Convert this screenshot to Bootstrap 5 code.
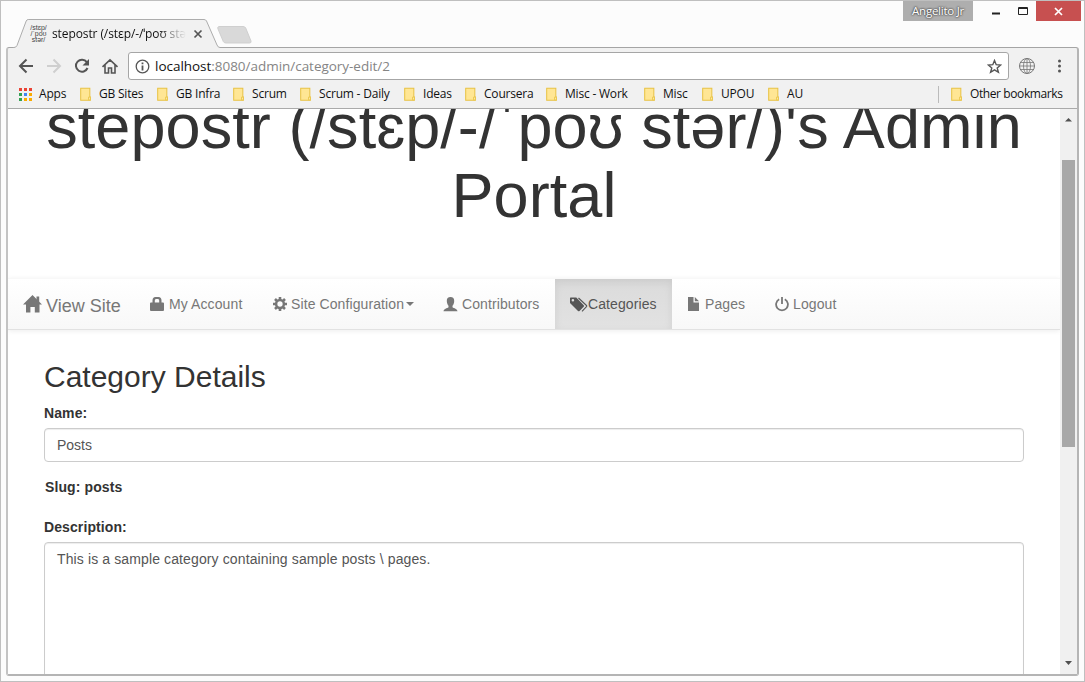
<!DOCTYPE html>
<html lang="en">
<head>
<meta charset="utf-8">
<title>stepostr admin</title>
<link href="https://cdn.jsdelivr.net/npm/bootstrap@5.3.0/dist/css/bootstrap.min.css" rel="stylesheet">
<style>
body{font-family:"Liberation Sans",Arial,sans-serif;font-size:14px;line-height:20px;color:#333;background:#fcfcfc}
svg{display:block;flex:none}
.win{width:1085px;height:682px;border:1px solid #bfbfbf;background:#fcfcfc;padding:0 5px 5px}
.chromefont{font-family:"Open Sans","Noto Sans",sans-serif;font-size:12px;color:#111}
.strip{height:46px;margin-right:-5px}
.tabx{width:207px;height:29px;margin:18px 0 0 7px;z-index:2;margin-bottom:-1px}
.tabx .shape{position:absolute;left:0;top:0}
.tabx .face{padding-left:17px;height:29px;position:relative}
.favi{width:17px;font:7px/6px "Liberation Sans",sans-serif;color:#444;text-align:center}
.tabtitle{width:134px;margin-left:5px;overflow:hidden;white-space:nowrap;letter-spacing:-.1px;-webkit-mask-image:linear-gradient(90deg,#000 78%,transparent)}
.tabclose{margin-left:7px}
.newtab{margin:25px 0 0 -4px}
.user{width:70px;height:20px;background:#aeaeae;color:#fff;font-size:11.5px;line-height:20px;text-align:center;text-shadow:0 0 2px #333,0 0 2px #444;letter-spacing:-.25px}
.closebtn{width:45px;height:20px;background:#c75050;margin-right:3px}
.frame{height:629px;border:1px solid #a5a5a5;border-right:2px solid #b5b5b5;border-bottom:2px solid #b4b4b4;border-left:2px solid #c3c3c3;border-radius:3px;background:#f1f1f1;width:1073px}
.tools{height:31px;padding-left:10px}
.omni{width:881px;height:28px;margin-top:4px;border:1px solid #a6a6a6;border-radius:3px;background:#fff;padding:0 6px 0 6px}
.url{font-size:13.5px;color:#858585;margin-left:5px;letter-spacing:-.03px}
.url b{font-weight:400;color:#111}
.marks{height:30px;border-bottom:1px solid #aaa;padding-left:11px}
.bm{white-space:nowrap;letter-spacing:-.2px;height:30px}
.bm svg{margin-right:7px}
.other{letter-spacing:-.4px}
.view{height:565px;overflow:hidden}
.pagearea{width:1052px;flex:none;height:565px;background:#fff;overflow:hidden}
.hero{font-size:63px;line-height:69.3px;font-weight:400;margin:-17px 0 54px;white-space:nowrap;height:132px;letter-spacing:.07px}
.topnav{height:52px;border-top:1px solid #f8f8f8;border-bottom:1px solid #e2e2e2;background:linear-gradient(#fff,#f8f8f8);box-shadow:0 1px 5px rgba(0,0,0,.075);color:#777;flex-wrap:nowrap}
.topnav a{color:#777;text-decoration:none;height:50px;padding:0 0 0 15px;white-space:nowrap;letter-spacing:.1px}
.topnav .on{color:#555;background:linear-gradient(#dbdbdb,#e2e2e2);box-shadow:inset 0 3px 9px rgba(0,0,0,.075)}
.topnav .brandx{font-size:18px;letter-spacing:0}
.main{padding:29px 36px 0}
.main h2{font-size:30px;line-height:33px;font-weight:400;margin:1px 0 10px;height:33px}
.lab{font-weight:700;line-height:20px;height:20px;margin-bottom:5px;letter-spacing:.1px}
.slug{margin:15px 0 20px;padding-left:1px}
.main .form-control{border:1px solid #ccc;border-radius:4px;padding:6px 12px;font-size:14px;line-height:20px;color:#555;box-shadow:inset 0 1px 1px rgba(0,0,0,.075);resize:none}
.main textarea.form-control{letter-spacing:.12px;height:210px}
.main input.form-control{height:34px}
.sb{width:17px;background:#f0f0f0}
.thumb{height:287px;width:13px;margin:38px auto 0;background:#a8a8a8}
</style>
<script src="https://cdn.jsdelivr.net/npm/bootstrap@5.3.0/dist/js/bootstrap.bundle.min.js"></script>
</head>
<body>
<svg width="0" height="0" class="position-absolute"><defs>
<symbol id="fold" viewBox="0 0 13 15"><path d="M.75.75h9.9v9.6h.6v3.4H.75z" fill="#ffe694" stroke="#e8c244" stroke-width="1.1"/><path d="M9.3 13.4v-3.1h2v3.1z" fill="#ffefb0" stroke="#eac549" stroke-width="1"/></symbol>
</defs></svg>
<div class="win overflow-hidden">
 <div class="strip chromefont d-flex align-items-start">
  <div class="tabx position-relative">
   <svg class="shape" width="207" height="30"><path d="M0 28.500h1q2 0 3-2L13.200 2q.7-1.500 2-1.500H191q1.800 0 2.500 1.500L204 26q1 2.500 3 2.500V30H0z" fill="#f1f1f1"/><path d="M0 28.500h1q2 0 3-2L13.200 2q.7-1.500 2-1.500H191q1.800 0 2.500 1.500L204 26q1 2.500 3 2.500" fill="none" stroke="#adadad"/></svg>
   <div class="face d-flex align-items-center"><div class="favi">/stɛp/<br>/ˈpoʊ<br>stər/</div><div class="tabtitle">stepostr (/stɛp/-/ˈpoʊ stər/)</div>
   <svg width="10" height="10" class="tabclose"><path d="M1.500 1.500l7 7m0-7l-7 7" stroke="#555" stroke-width="1.700"/></svg></div>
  </div>
  <svg class="newtab" width="36" height="18"><path d="M3 .5h24q2 0 2.700 1.500L35 15q.5 2-1.500 2H10q-2 0-2.700-1.500L2 3Q1 1 3 .5z" fill="#d9d9d9" stroke="#cfcfcf"/></svg>
  <div class="ms-auto user">Angelito Jr</div>
  <svg width="63" height="20"><path d="M19 12.500h8" stroke="#222" stroke-width="2"/><path d="M45.500 6.500h9v7h-9zM45 7.500h10" fill="none" stroke="#222"/></svg>
  <div class="closebtn d-flex align-items-center justify-content-center"><svg width="9" height="9"><path d="M1 1l7 7m0-7L1 8" stroke="#fff" stroke-width="1.700"/></svg></div>
 </div>
 <div class="frame">
  <div class="tools chromefont d-flex">
   <svg width="110" height="34" fill="none" stroke="#555" stroke-width="2"><path d="M15 18H2M8.500 11.500L2 18l6.500 6.500"/><path stroke="#cfcfcf" d="M29 18h13M35.500 11.500L42 18l-6.500 6.500"/><path d="M68.800 14.200A6 6 0 1 0 69.500 20"/><path d="M71 11v6.500h-6.500z" fill="#555" stroke="none"/><path d="M84.500 18.800L92 11.800l7.500 7M87 17v8h3.500v-5h3v5H97v-8" stroke-width="1.600"/></svg>
   <div class="omni d-flex align-items-center">
    <svg width="15" height="15" fill="none" stroke="#555"><circle cx="7.500" cy="7.500" r="6.300" stroke-width="1.300"/><path d="M7.500 3.500v1.700M7.500 6.500v5" stroke-width="1.800"/></svg>
    <div class="url"><b>localhost</b>:8080/admin/category-edit/2</div>
    <svg class="ms-auto" width="15" height="15"><path d="M7.500 1.500l1.700 4.200 4.500.3-3.500 2.900 1.200 4.400-3.900-2.500-3.900 2.500 1.200-4.400L1.300 6l4.500-.3z" fill="none" stroke="#555" stroke-width="1.400"/></svg>
   </div>
   <svg width="64" height="34" fill="none" stroke="#777"><g transform="translate(18 18)"><circle r="7.500"/><ellipse rx="3.500" ry="7.500" stroke-width=".8"/><path d="M0-7.500v15M-7.500 0h15M-6.500-3.500h13M-6.500 3.500h13" stroke-width=".8"/></g><g fill="#555" stroke="none"><circle cx="50.500" cy="13" r="1.500"/><circle cx="50.500" cy="18" r="1.500"/><circle cx="50.500" cy="23" r="1.500"/></g></svg>
  </div>
  <div class="marks chromefont d-flex">
   <div class="bm d-flex align-items-center" style="width:61px"><svg width="13" height="13"><path d="M0 0h3v3H0zM5 0h3v3H5zM10 0h3v3h-3z" fill="#ea4335"/><path d="M0 5h3v3H0zM0 10h3v3H0z" fill="#34a053"/><path d="M5 5h3v3H5z" fill="#4285f4"/><path d="M10 5h3v3h-3zM5 10h3v3H5zM10 10h3v3h-3z" fill="#f9ab00"/></svg>Apps</div>
   <div class="bm d-flex align-items-center" style="width:77px"><svg width="12" height="15"><use href="#fold"/></svg>GB Sites</div>
   <div class="bm d-flex align-items-center" style="width:76px"><svg width="12" height="15"><use href="#fold"/></svg>GB Infra</div>
   <div class="bm d-flex align-items-center" style="width:67px"><svg width="12" height="15"><use href="#fold"/></svg>Scrum</div>
   <div class="bm d-flex align-items-center" style="width:104px"><svg width="12" height="15"><use href="#fold"/></svg>Scrum - Daily</div>
   <div class="bm d-flex align-items-center" style="width:61px"><svg width="12" height="15"><use href="#fold"/></svg>Ideas</div>
   <div class="bm d-flex align-items-center" style="width:81px"><svg width="12" height="15"><use href="#fold"/></svg>Coursera</div>
   <div class="bm d-flex align-items-center" style="width:98px"><svg width="12" height="15"><use href="#fold"/></svg>Misc - Work</div>
   <div class="bm d-flex align-items-center" style="width:58px"><svg width="12" height="15"><use href="#fold"/></svg>Misc</div>
   <div class="bm d-flex align-items-center" style="width:66px"><svg width="12" height="15"><use href="#fold"/></svg>UPOU</div>
   <div class="bm d-flex align-items-center" style="width:170px"><svg width="12" height="15"><use href="#fold"/></svg>AU</div>
   <div class="bm other d-flex align-items-center"><svg width="6" height="17"><path d="M.5 0v17" stroke="#bbb"/></svg><svg width="12" height="15"><use href="#fold"/></svg>Other bookmarks</div>
  </div>
  <div class="view d-flex">
   <div class="pagearea">
    <h1 class="hero text-center">stepostr (/stɛp/-/ˈpoʊ stər/)'s Admin<br>Portal</h1>
    <nav class="topnav d-flex">
     <a class="brandx d-flex align-items-center" style="width:127px" href="#"><svg width="20" height="18" class="me-1" fill="currentColor"><path d="M9.500 0L19 9.500h-2.500V17.500h-4.700V12H7.400v5.500H3V9.500H0z"/><path d="M13.500 1.500h2.700V7h-2.700z"/></svg><span class="pt-1" style="margin-left:-1px">View Site</span></a>
     <a class="d-flex align-items-center" style="width:123px" href="#"><svg width="14" height="15" style="margin-right:5px" fill="currentColor"><path d="M1 5.500h1.500V3.500Q2.500 0 5.500 0h3q3 0 3 3.500v2H13q1 0 1 1V13q0 1-1 1H1q-1 0-1-1V6.500q0-1 1-1zm3.800 0h4.400V3.500Q9.200 2 8 2H6Q4.800 2 4.800 3.500z"/></svg>My Account</a>
     <a class="d-flex align-items-center" style="width:170px" href="#"><svg width="14" height="14" style="margin-right:4px" fill="none" stroke="currentColor"><circle cx="7" cy="7" r="3.900" stroke-width="2.500"/><path d="M7 0v2.500M7 11.500V14M0 7h2.500M11.500 7H14M2 2l1.900 1.900M10.100 10.100L12 12M12 2l-1.900 1.900M3.900 10.100L2 12" stroke-width="2.600"/></svg>Site Configuration<svg width="8" height="4" style="margin-left:2px"><path d="M0 0h8L4 4z" fill="#777"/></svg></a>
     <a class="d-flex align-items-center" style="width:127px" href="#"><svg width="15" height="15" style="margin-right:4px" fill="currentColor"><path d="M7.500 0C10 0 11.300 1.500 11.200 4c0 2.400-.8 3.700-1.700 4.700v1.500c1.500 1.200 4.800 1.400 5 4H.5c.2-2.600 3.600-2.800 5-4V8.700C4.600 7.700 3.900 6.400 3.800 4 3.700 1.500 5 0 7.500 0z"/></svg>Contributors</a>
     <a class="on d-flex align-items-center" style="width:117px" href="#"><svg width="18" height="15" fill="currentColor"><path d="M0 1v5l8 8q.8.700 1.500 0l4.200-4.200q.7-.8 0-1.500L6.300.5H.5zM2.900 2a1.300 1.300 0 1 1 0 2.600 1.300 1.300 0 0 1 0-2.600z" fill-rule="evenodd"/><path d="M8.500 1l8 7.500q.6.600 0 1.200L12 14.300" fill="none" stroke="currentColor" stroke-width="1.100"/></svg>Categories</a>
     <a class="d-flex align-items-center" style="width:88px" href="#"><svg width="13" height="15" style="margin-right:5px" fill="currentColor"><path d="M1 0h5.500v5.500H12V14H1zM7.800 0L12 4.300H7.800z"/></svg>Pages</a>
     <a class="d-flex align-items-center" href="#"><svg width="14" height="15" style="margin-right:4px" fill="none" stroke="currentColor" stroke-width="1.800"><path d="M4.200 2.300a5.900 5.900 0 1 0 5.600 0M7 0v7"/></svg>Logout</a>
    </nav>
    <div class="main">
     <h2>Category Details</h2>
     <div class="lab">Name:</div>
     <input class="form-control" value="Posts">
     <div class="lab slug">Slug: posts</div>
     <div class="lab">Description:</div>
     <textarea class="form-control">This is a sample category containing sample posts \ pages.</textarea>
    </div>
   </div>
   <div class="sb d-flex flex-column align-items-center pt-2"><svg width="8" height="5"><path d="M0 4.500h7L3.500 1z" fill="#505050"/></svg><div class="thumb"></div><svg width="8" height="5" class="mt-auto mb-2"><path d="M0 0h7L3.500 4z" fill="#505050"/></svg></div>
  </div>
 </div>
</div>
</body>
</html>
